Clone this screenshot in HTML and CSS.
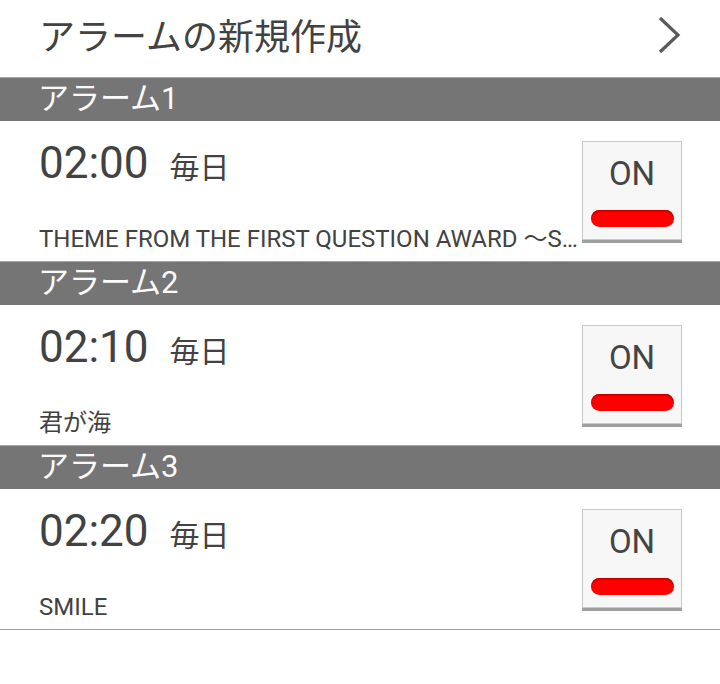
FILE: index.html
```html
<!DOCTYPE html>
<html lang="ja">
<head>
     <meta charset="UTF-8">
     <meta name="viewport" content="width=device-width, initial-scale=1.0">
     <title>アラーム一覧</title>
     <link rel="stylesheet" href="styles.css">
     <script>
          var list; //알람 목록을 출력할 div

          //알람 한개 = 1차원 배열 [이름, 시각, 반복, 곡명, on/off]
          var alarm=[
               ["アラーム1","02:00","毎日","THEME FROM THE FIRST QUESTION AWARD 〜SMILE〜",true],
               ["アラーム2","02:10","毎日","君が海",true],
               ["アラーム3","02:20","毎日","SMILE",true]
          ];

          function getList(){
               var str="";
               for(var i=0;i<alarm.length;i++){
                    str+="<div class='bar'>"+alarm[i][0]+"</div>";
                    str+="<div class='row'>";
                    str+="<div class='info'>";
                    str+="<div class='time'>"+alarm[i][1]+"<span class='repeat'>"+alarm[i][2]+"</span></div>";
                    str+="<div class='song'>"+alarm[i][3]+"</div>";
                    str+="</div>";
                    str+="<button class='toggle'>"+(alarm[i][4]?"ON":"OFF")+"<span class='lamp'></span></button>";
                    str+="</div>";
               }
               list.innerHTML=str;
          }

          window.addEventListener("load",function(){
               list=document.querySelector(".list");
               getList();
          });
     </script>
</head>
<body>
     <div class="wrapper">
          <div class="header">
               <span class="title">アラームの新規作成</span>
               <svg class="arrow" width="26" height="40" viewBox="0 0 26 40">
                    <polyline points="3,2 21,19 3,36" fill="none" stroke="#5a5a5a" stroke-width="3.2"/>
               </svg>
          </div>
          <div class="list"></div>
     </div>
</body>
</html>
```

FILE: styles.css
```css
body{
     margin: 0;
     background: #ffffff;
     font-family: Roboto, "Noto Sans CJK JP", sans-serif;
     color: #424242;
}
.wrapper{
     width: 720px;
}
.header{
     height: 77px;
     display: flex;
     align-items: center;
     justify-content: space-between;
     padding: 0 38px 0 39px;
     box-sizing: border-box;
}
.title{
     font-size: 36px;
     line-height: 1;
     margin-top: -1px;
}
.arrow{
     margin-top: -6px;
     margin-right: -1px;
}
.bar{
     height: 44px;
     box-sizing: border-box;
     border-top: 1px solid #a4a4a4;
     background: #757575;
     color: #fafafa;
     font-size: 31px;
     line-height: 42px;
     padding-left: 38px;
}
.row{
     height: 140px;
     display: flex;
     padding: 0 38px 0 39px;
     box-sizing: border-box;
}
.list .row:last-child{
     border-bottom: 1px solid #9e9e9e;
     height: 141px;
}
.info{
     flex: 1;
     min-width: 0;
}
.time{
     font-size: 44px;
     line-height: 44px;
     margin-top: 20px;
}
.repeat{
     font-size: 30px;
     margin-left: 21px;
}
.song{
     font-size: 24px;
     line-height: 30px;
     margin-top: 34px;
     white-space: nowrap;
     overflow: hidden;
     text-overflow: ellipsis;
}
.toggle{
     width: 100px;
     height: 99px;
     margin-top: 20px;
     padding: 15px 0 0 0;
     box-sizing: border-box;
     background: #f7f7f7;
     border: 1px solid #c8c8c8;
     box-shadow: 0 3px 0 #a0a0a0;
     font-family: Roboto, sans-serif;
     font-size: 33px;
     line-height: 33px;
     color: #444444;
     display: flex;
     flex-direction: column;
     align-items: center;
}
.lamp{
     width: 83px;
     height: 17px;
     margin-top: 20px;
     border-radius: 9px;
     background: #ff0000;
     box-shadow: inset 0 2px 0 #c80000;
}
```
